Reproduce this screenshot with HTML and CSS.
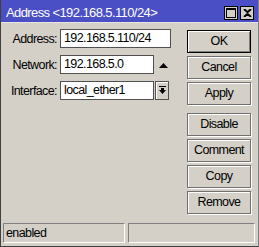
FILE: index.html
```html
<!DOCTYPE html>
<html>
    <head>
        <meta charset="UTF-8">
        <title>Address</title>
        <link rel="stylesheet" href="styles.css">
    </head>
    <body>
        <div class="window">
            <div class="titlebar">
                <span class="title">Address &lt;192.168.5.110/24&gt;</span>
                <div class="title_btns">
                    <span class="tbtn">
                        <svg width="10" height="10" viewBox="0 0 10 10">
                            <rect x="0.5" y="0.5" width="9" height="9" fill="none" stroke="#000"/>
                            <rect x="0" y="0" width="10" height="2" fill="#000"/>
                        </svg>
                    </span>
                    <span class="tbtn">
                        <svg width="9" height="8" viewBox="0 0 9 8">
                            <path d="M1 0 L4.5 3.2 L8 0 M1 8 L4.5 4.8 L8 8" stroke="#000" stroke-width="2" fill="none"/>
                        </svg>
                    </span>
                </div>
            </div>

            <div class="body">
                <div class="form">
                    <div class="row">
                        <label>Address:</label>
                        <div class="field">192.168.5.110/24</div>
                    </div>
                    <div class="row">
                        <label>Network:</label>
                        <div class="field short">192.168.5.0</div>
                        <svg class="up" width="9" height="5" viewBox="0 0 9 5">
                            <polygon points="0,5 9,5 4.5,0" fill="#000"/>
                        </svg>
                    </div>
                    <div class="row">
                        <label>Interface:</label>
                        <div class="field short">local_ether1</div>
                        <span class="drop">
                            <svg width="7" height="9" viewBox="0 0 7 9">
                                <rect x="0" y="0" width="7" height="1" fill="#000"/>
                                <rect x="2" y="2" width="3" height="2" fill="#000"/>
                                <polygon points="0,4 7,4 3.5,8" fill="#000"/>
                            </svg>
                        </span>
                    </div>
                </div>

                <div class="buttons">
                    <div class="btn default">OK</div>
                    <div class="btn">Cancel</div>
                    <div class="btn">Apply</div>
                    <div class="btn spaced">Disable</div>
                    <div class="btn">Comment</div>
                    <div class="btn">Copy</div>
                    <div class="btn">Remove</div>
                </div>
            </div>

            <div class="statusbar">
                <div class="panel first">enabled</div>
                <div class="panel second"></div>
            </div>
        </div>
    </body>
</html>
```

FILE: styles.css
```css
body {
    margin: 0;
    background: #d4d0c8;
}
.window {
    width: 259px;
    height: 247px;
    box-sizing: border-box;
    background: #d4d0c8;
    border-left: 1px solid #404040;
    border-right: 1px solid #808080;
    border-bottom: 1px solid #404040;
    font-family: 'Liberation Sans', Arial, sans-serif;
    font-size: 12.5px;
    letter-spacing: -0.6px;
    color: #000;
    display: flex;
    flex-direction: column;
}
.titlebar {
    height: 22px;
    background: #4a4fc6;
    display: flex;
    align-items: flex-start;
    justify-content: space-between;
    padding: 0 4px 0 5px;
    border-bottom: 1px solid #e8e6e0;
}
.title {
    color: #fff;
    font-size: 13px;
    line-height: 14px;
    margin-top: 6px;
}
.title_btns {
    display: flex;
    gap: 2px;
    margin-top: 6px;
}
.tbtn {
    width: 12px;
    height: 12px;
    background: #d4d0c8;
    border: 1px solid #000;
    display: flex;
    align-items: center;
    justify-content: center;
}
.body {
    display: flex;
    justify-content: space-between;
    padding: 6px 7px 0 0;
    flex: 1;
}
.form {
    display: flex;
    flex-direction: column;
    gap: 7px;
}
.row {
    display: flex;
    align-items: center;
    height: 19px;
}
.row label {
    width: 56px;
    text-align: right;
    margin-right: 3px;
}
.field {
    width: 106px;
    height: 17px;
    line-height: 17px;
    padding-left: 3px;
    background: #fff;
    border: 1px solid #505050;
}
.field.short {
    width: 89px;
}
.up {
    margin-left: 5px;
    margin-top: 1px;
}
.drop {
    width: 12px;
    height: 17px;
    margin-left: 1px;
    border: 1px solid #505050;
    box-shadow: inset 1px 1px 0 #fff;
    display: flex;
    align-items: center;
    justify-content: center;
}
.buttons {
    display: flex;
    flex-direction: column;
    gap: 3px;
    padding-top: 1px;
}
.btn {
    width: 62px;
    height: 21px;
    line-height: 21px;
    text-align: center;
    border: 1px solid #707070;
    box-shadow: inset 1px 1px 0 #fff, 1px 1px 0 #fff;
}
.btn.default {
    border: 1px solid #000;
    box-shadow: inset 1px 1px 0 #fff, inset -1px -1px 0 #808080;
}
.btn.spaced {
    margin-top: 5px;
}
.statusbar {
    display: flex;
    gap: 3px;
    padding: 0 3px 3px 2px;
}
.panel {
    height: 18px;
    line-height: 18px;
    border-top: 1px solid #808080;
    border-left: 1px solid #808080;
    border-bottom: 1px solid #fff;
    border-right: 1px solid #fff;
    padding-left: 2px;
}
.first {
    width: 118px;
}
.second {
    flex: 1;
}
```
